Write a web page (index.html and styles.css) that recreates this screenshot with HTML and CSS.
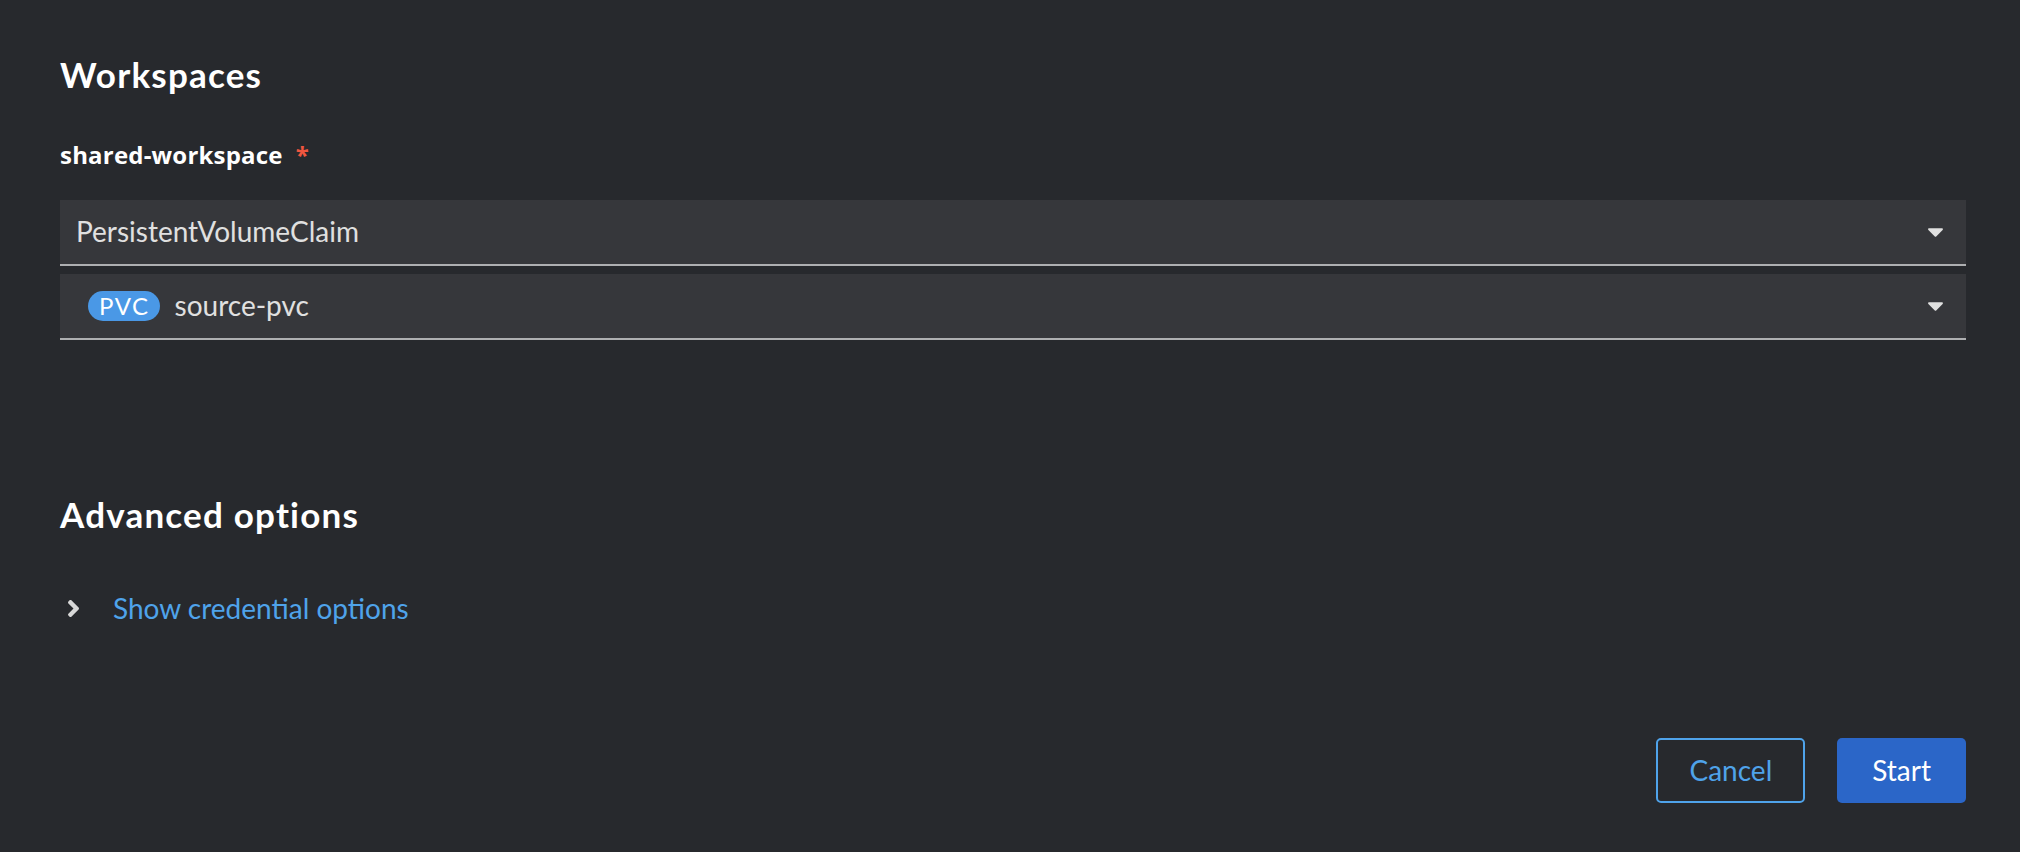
FILE: index.html
```html
<!DOCTYPE html>
<html lang="en">
<head>
<meta charset="utf-8">
<title>Start Pipeline</title>
<link rel="stylesheet" href="styles.css">
</head>
<body>
<div class="page">
  <h2 class="title">Workspaces</h2>
  <div class="field">
    <label class="label">shared-workspace<span class="required">*</span></label>
    <div class="select">
      <span class="select-text">PersistentVolumeClaim</span>
      <svg class="caret" viewBox="10 192 300 168" width="15" height="9"><path d="M31.3 192h257.3c17.8 0 26.7 21.5 14.1 34.1L174.1 354.8c-7.8 7.8-20.5 7.8-28.3 0L17.2 226.1C4.6 213.5 13.5 192 31.3 192z" fill="#e0e0e0"/></svg>
    </div>
    <div class="select select-resource">
      <span class="resource"><span class="badge">PVC</span><span class="select-text">source-pvc</span></span>
      <svg class="caret" viewBox="10 192 300 168" width="15" height="9"><path d="M31.3 192h257.3c17.8 0 26.7 21.5 14.1 34.1L174.1 354.8c-7.8 7.8-20.5 7.8-28.3 0L17.2 226.1C4.6 213.5 13.5 192 31.3 192z" fill="#e0e0e0"/></svg>
    </div>
  </div>
  <h2 class="title title-adv">Advanced options</h2>
  <div class="expand">
    <svg class="chevron" viewBox="25 96 206 320" width="11" height="17"><path d="M224.3 273l-136 136c-9.4 9.4-24.6 9.4-33.9 0l-22.6-22.6c-9.4-9.4-9.4-24.6 0-33.9l96.4-96.4-96.4-96.4c-9.4-9.4-9.4-24.6 0-33.9L54.3 103c9.4-9.4 24.6-9.4 33.9 0l136 136c9.5 9.4 9.5 24.6.1 34z" fill="#d8d8d8"/></svg>
    <span class="link">Show credential options</span>
  </div>
  <div class="footer">
    <button class="btn btn-secondary">Cancel</button>
    <button class="btn btn-primary">Start</button>
  </div>
</div>
</body>
</html>
```
FILE: styles.css
```css
html, body {
  margin: 0;
  padding: 0;
  background: #27292d;
}
body {
  font-family: "Lato", "Open Sans", sans-serif;
  color: #e0e0e0;
  width: 2020px;
  height: 852px;
  overflow: hidden;
}
.page {
  padding: 52px 54px 0 60px;
  display: flex;
  flex-direction: column;
}
.title {
  margin: 0;
  font-size: 35px;
  line-height: 44px;
  font-weight: 700;
  letter-spacing: 1.2px;
  color: #ffffff;
}
.field {
  display: flex;
  flex-direction: column;
  margin-top: 43px;
}
.label {
  font-family: "Open Sans", "Lato", sans-serif;
  font-size: 24px;
  line-height: 32px;
  font-weight: 700;
  letter-spacing: 0.2px;
  color: #ffffff;
  margin-bottom: 29px;
}
.required {
  color: #f0563f;
  margin-left: 13px;
}
.select {
  height: 64px;
  background: #36373b;
  border-bottom: 2px solid #aeafb1;
  display: flex;
  align-items: center;
  justify-content: space-between;
  padding: 0 23px 0 16px;
}
.select + .select {
  margin-top: 8px;
}
.select-resource {
  padding-left: 28px;
}
.select-text {
  font-size: 28px;
  line-height: 1.2;
  color: #e0e0e0;
}
.resource {
  display: flex;
  align-items: center;
  gap: 15px;
}
.badge {
  height: 30px;
  padding: 0 10px 0 11px;
  border-radius: 15px;
  background: #4a98e6;
  color: #ffffff;
  font-size: 24px;
  letter-spacing: 1.5px;
  line-height: 30px;
}
.title-adv {
  margin-top: 152px;
}
.expand {
  display: flex;
  align-items: center;
  margin-top: 55px;
  padding-left: 8px;
  height: 34px;
}
.chevron {
  margin-right: 34px;
}
.link {
  font-size: 28px;
  line-height: 34px;
  color: #4fa3ea;
}
.footer {
  display: flex;
  justify-content: flex-end;
  gap: 32px;
  margin-top: 113px;
}
.btn {
  height: 65px;
  border: 2px solid transparent;
  border-radius: 5px;
  padding: 0 31px;
  font-family: inherit;
  font-size: 28px;
  line-height: 1.2;
  background: transparent;
}
.btn-secondary {
  border-color: #4fa3ea;
  color: #4fa3ea;
}
.btn-primary {
  padding: 0 33px;
  background: #2b66c8;
  color: #ffffff;
}
```
